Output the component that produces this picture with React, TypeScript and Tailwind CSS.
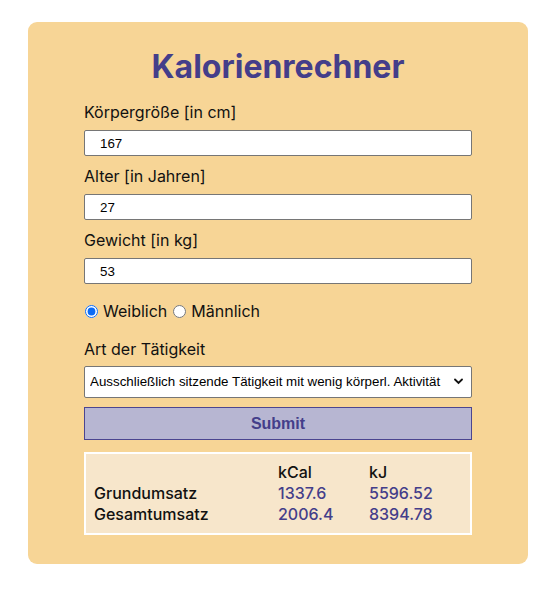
import { useState } from "react";

type Field = {
  id: string;
  label: string;
  value: string;
};

const fields: Field[] = [
  { id: "height", label: "Körpergröße [in cm]", value: "167" },
  { id: "age", label: "Alter [in Jahren]", value: "27" },
  { id: "weight", label: "Gewicht [in kg]", value: "53" },
];

const activities = [
  "Ausschließlich sitzende Tätigkeit mit wenig körperl. Aktivität",
  "Überwiegend sitzende Tätigkeit",
  "Überwiegend gehende oder stehende Tätigkeit",
  "Körperlich anstrengende Tätigkeit",
];

export default function App() {
  const [values, setValues] = useState<Record<string, string>>({
    height: "167",
    age: "27",
    weight: "53",
  });
  const [gender, setGender] = useState("w");
  const [activity, setActivity] = useState(activities[0]);

  return (
    <div className="min-h-[599px] bg-white font-['Inter',sans-serif] text-[#111]">
      <div className="ml-[28px] mt-[22px] w-[500px] rounded-[9px] bg-[#f7d596] pb-[29px] pt-[25px]">
        <h1 className="text-center text-[32px] font-bold leading-[39px] text-[#443e8a]">
          Kalorienrechner
        </h1>

        <form
          className="mx-auto mt-[17px] w-[388px]"
          onSubmit={(event) => event.preventDefault()}
        >
          {fields.map((field) => (
            <div key={field.id} className="mb-[11px]">
              <label htmlFor={field.id} className="block text-[16px] leading-[19px]">
                {field.label}
              </label>
              <input
                id={field.id}
                type="text"
                value={values[field.id]}
                onChange={(event) =>
                  setValues((prev) => ({ ...prev, [field.id]: event.target.value }))
                }
                className="mt-2 block h-[26px] w-full rounded-[2px] border border-[#767676] bg-white pl-[15px] font-['Liberation_Sans',Arial,sans-serif] text-[13.33px] text-black outline-none"
              />
            </div>
          ))}

          {/* margin collapses with the field's mb-[11px] above */}
          <div className="mt-[18px] flex items-center text-[16px] leading-[19px]">
            <input
              type="radio"
              name="gender"
              checked={gender === "w"}
              onChange={() => setGender("w")}
              className="ml-[1px] mr-[5px] h-[13px] w-[13px] accent-[#0b6bf5]"
            />
            <span>Weiblich</span>
            <input
              type="radio"
              name="gender"
              checked={gender === "m"}
              onChange={() => setGender("m")}
              className="ml-[6px] mr-[5px] h-[13px] w-[13px] accent-[#0b6bf5]"
            />
            <span>Männlich</span>
          </div>

          <div className="mt-[19px] text-[16px] leading-[19px]">Art der Tätigkeit</div>

          <div className="relative mt-[7px]">
            <select
              value={activity}
              onChange={(event) => setActivity(event.target.value)}
              className="block h-[32px] w-full appearance-none rounded-[2px] border border-[#767676] bg-white pl-[5px] font-['Liberation_Sans',Arial,sans-serif] text-[13.33px] text-black outline-none"
            >
              {activities.map((item) => (
                <option key={item} value={item}>
                  {item}
                </option>
              ))}
            </select>
            <svg
              className="pointer-events-none absolute right-[9px] top-[12px]"
              width="9"
              height="7"
              viewBox="0 0 9 7"
              fill="none"
            >
              <path d="M1 1.5 4.5 5 8 1.5" stroke="#111" strokeWidth="1.8" strokeLinecap="round" />
            </svg>
          </div>

          <button
            type="submit"
            className="mt-[9px] block h-[33px] w-full border border-[#4b4590] bg-[#b7b6d2] font-['Liberation_Sans',Arial,sans-serif] text-[16px] font-bold text-[#443e8a]"
          >
            Submit
          </button>

          <div className="mt-[12px] border-2 border-white bg-[#f7e6cb] pb-[8px] pl-[8px] pt-[8px] text-[16px] font-medium leading-[21px]">
            <div className="grid grid-cols-[184px_91px_1fr]">
              <span />
              <span>kCal</span>
              <span>kJ</span>
              <span>Grundumsatz</span>
              <span className="text-[#443e8a]">1337.6</span>
              <span className="text-[#443e8a]">5596.52</span>
              <span>Gesamtumsatz</span>
              <span className="text-[#443e8a]">2006.4</span>
              <span className="text-[#443e8a]">8394.78</span>
            </div>
          </div>
        </form>
      </div>
    </div>
  );
}
